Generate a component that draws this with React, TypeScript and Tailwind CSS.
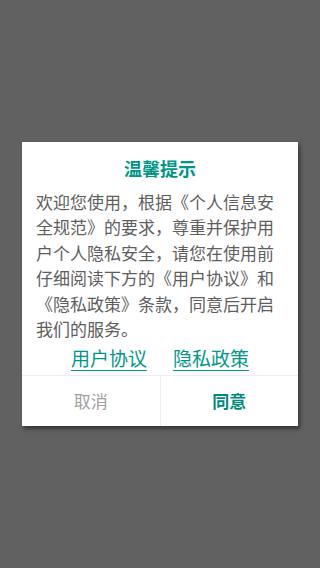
export default function App() {
  const font = { fontFamily: '"Noto Sans CJK SC", "Noto Sans", sans-serif' }
  return (
    <div className="flex h-[568px] w-[320px] items-center justify-center bg-[#616161]" style={font}>
      <div className="flex h-[284px] w-[276px] flex-col bg-white shadow-[2px_3px_4px_rgba(0,0,0,0.45)]">
        <h1 className="pt-[13px] text-center text-[18px] leading-[26px] font-bold text-[#00968a]">温馨提示</h1>
        <p className="px-[14px] pt-[8px] text-[17px] leading-[25.4px] text-[#5e5e5e]">
          欢迎您使用，根据《个人信息安全规范》的要求，尊重并保护用户个人隐私安全，请您在使用前仔细阅读下方的《用户协议》和《隐私政策》条款，同意后开启我们的服务。
        </p>
        <div className="flex justify-center gap-[26px] pt-[4px] pb-[3px] text-[19px] leading-[26px] text-[#00968a]">
          <a className="underline underline-offset-[4px]">用户协议</a>
          <a className="underline underline-offset-[4px]">隐私政策</a>
        </div>
        <div className="mt-auto flex h-[51px] border-t border-[#eeeeee]">
          <button className="flex-1 border-r border-[#eeeeee] text-[17px] text-[#a0a0a0]">取消</button>
          <button className="flex-1 text-[17px] font-bold text-[#00897b]">同意</button>
        </div>
      </div>
    </div>
  )
}
